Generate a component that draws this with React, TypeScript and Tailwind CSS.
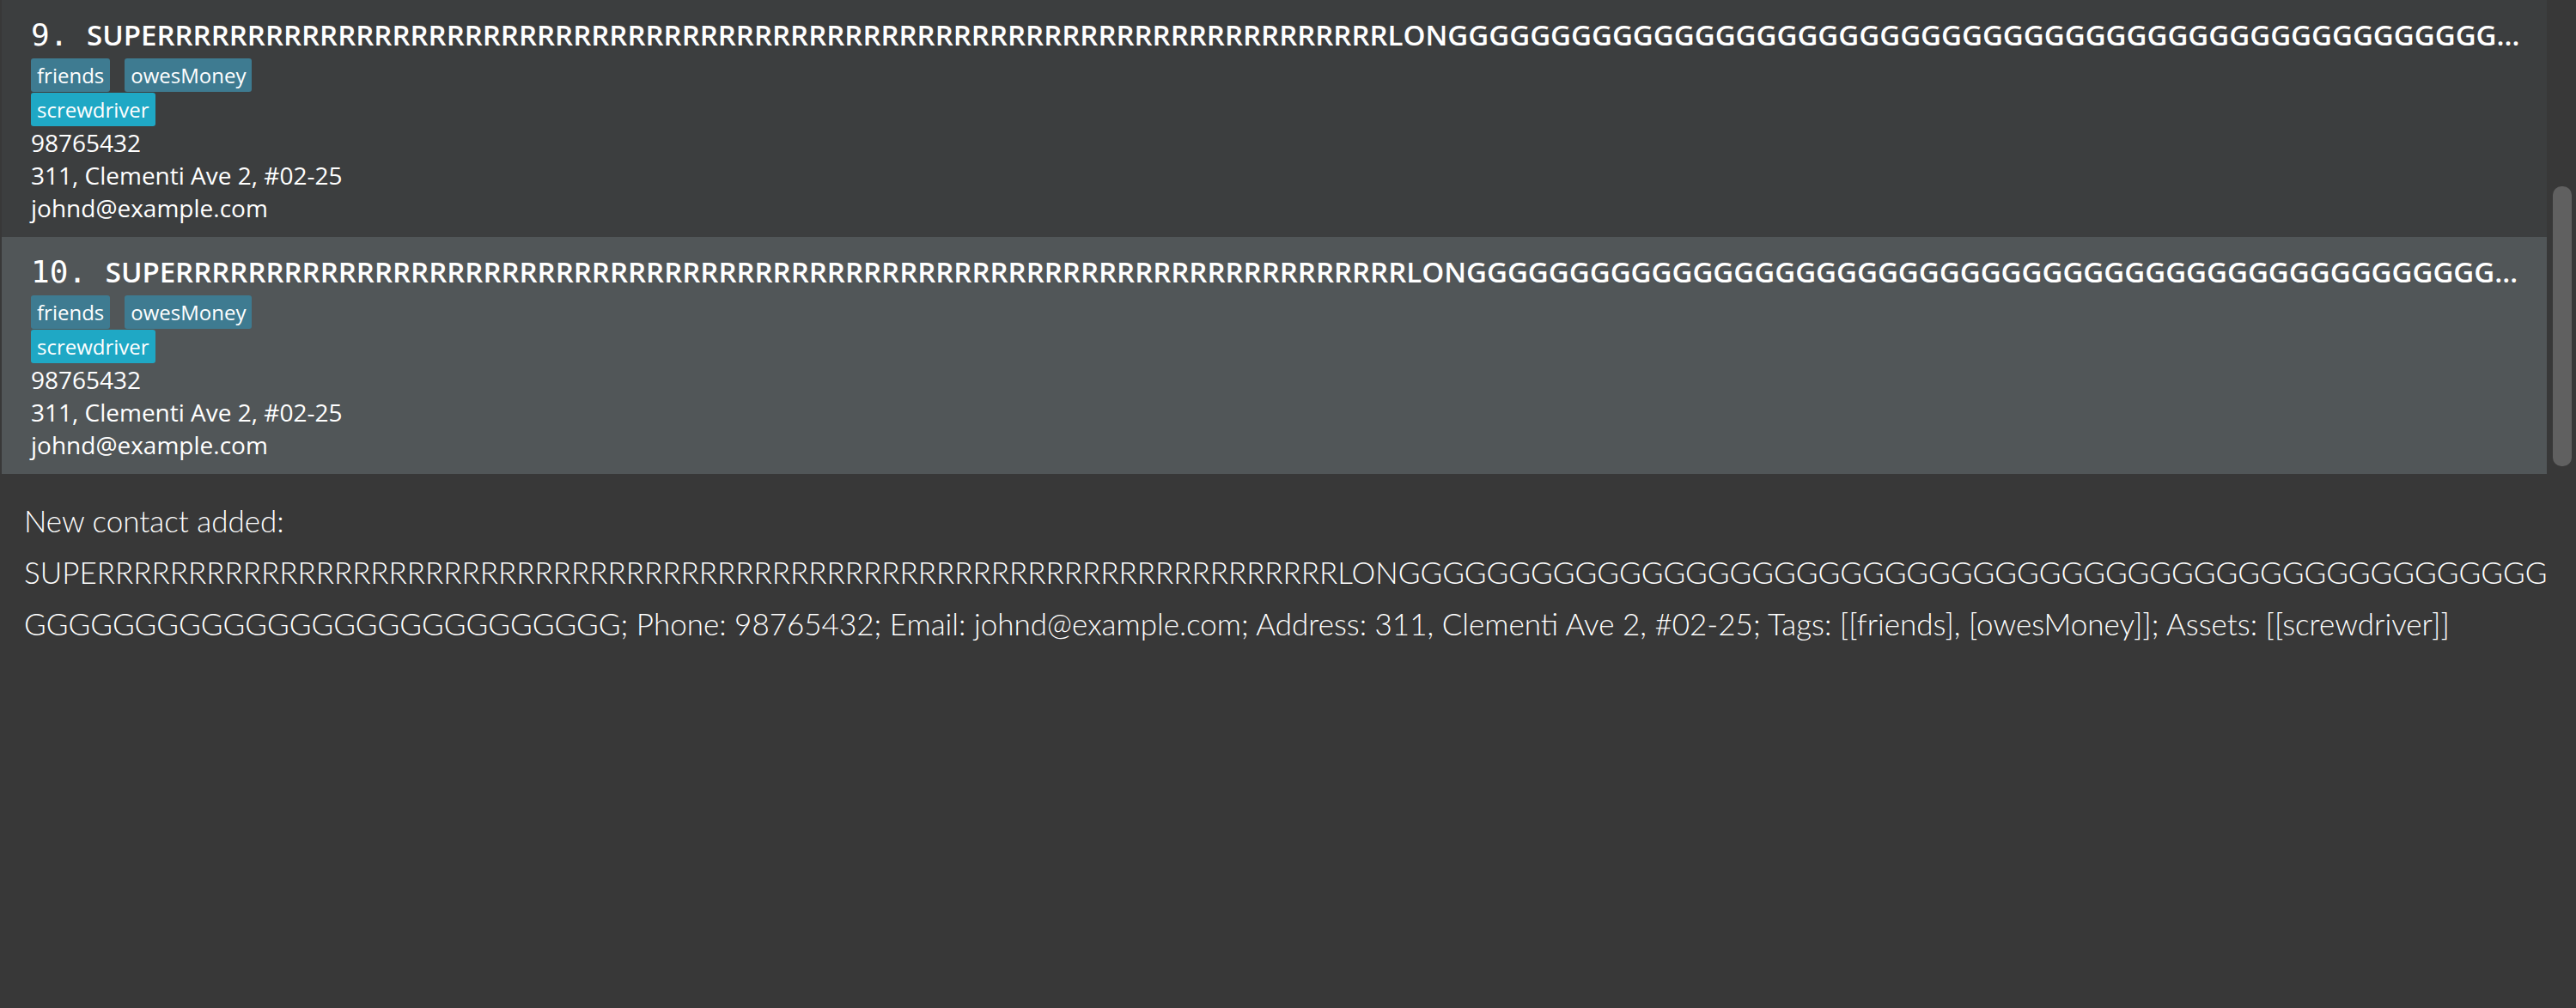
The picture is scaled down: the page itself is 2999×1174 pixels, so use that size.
import React from 'react';
import clsx from 'clsx';

const NAME = 'SUPE' + 'R'.repeat(68) + 'LON' + 'G'.repeat(79);

const person = {
  name: NAME,
  phone: '98765432',
  address: '311, Clementi Ave 2, #02-25',
  email: 'johnd@example.com',
  tags: ['friends', 'owesMoney'],
  assets: ['screwdriver'],
};

const Tag = ({ label, asset = false }: { label: string; asset?: boolean }) => (
  <span
    className={clsx(
      'flex h-[39px] items-center rounded-[3px] px-[7px] text-[24px] text-white',
      asset ? 'bg-[#1fa8c5]' : 'bg-[#3e7b91]'
    )}
  >
    {label}
  </span>
);

const PersonCard = ({ index, selected }: { index: number; selected?: boolean }) => (
  <div
    className={clsx(
      'flex h-[276px] min-w-0 flex-col pl-[34px] pr-[16px] pt-[18px]',
      selected ? 'bg-[#515658]' : 'bg-[#3c3e3f]'
    )}
  >
    <div className="truncate text-[33px] font-semibold leading-[46px] text-white">
      <span className="font-['DejaVu_Sans_Mono',monospace] text-[36px] font-normal">
        {index}.{' '}
      </span>
      {person.name}
    </div>
    <div className="mt-[4px] flex gap-[17px]">
      {person.tags.map((t) => (
        <Tag key={t} label={t} />
      ))}
    </div>
    <div className="mt-[1px] flex gap-[17px]">
      {person.assets.map((a) => (
        <Tag key={a} label={a} asset />
      ))}
    </div>
    <div className="text-[28px] leading-[38px] text-white">
      <div>{person.phone}</div>
      <div>{person.address}</div>
      <div>{person.email}</div>
    </div>
  </div>
);

export default function App() {
  const result =
    `New contact added: ${person.name}; Phone: ${person.phone}; Email: ${person.email}; ` +
    `Address: ${person.address}; Tags: [[friends], [owesMoney]]; Assets: [[screwdriver]]`;

  return (
    <div className="flex h-screen w-full flex-col bg-[#383838] font-['Open_Sans',sans-serif]">
      <div className="flex h-[552px]">
        <div className="flex min-w-0 flex-1 flex-col pl-[2px]">
          <PersonCard index={9} />
          <PersonCard index={10} selected />
        </div>
        <div className="w-[34px] shrink-0 pl-[7px] pt-[217px]">
          <div className="h-[326px] w-[22px] rounded-[10px] bg-[#606060]" />
        </div>
      </div>
      <div className="flex-1 pl-[28px] pr-[24px] pt-[24px] font-['Lato',sans-serif] text-[35px] font-light leading-[60px] break-words text-white">
        {result}
      </div>
    </div>
  );
}
